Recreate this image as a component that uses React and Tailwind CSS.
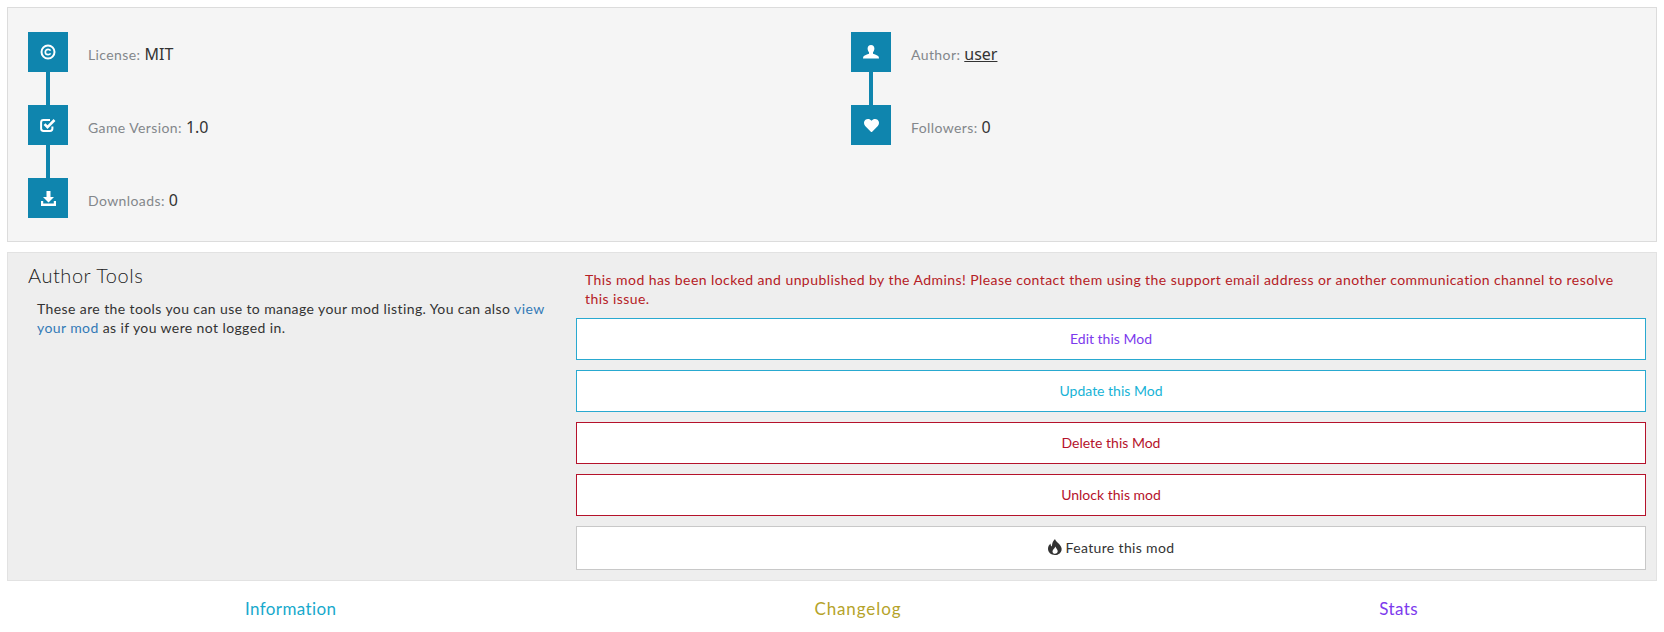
import React from "react";
import { FaHeart } from "react-icons/fa";

const font = "font-['Lato','Liberation_Sans',sans-serif]";

const CopyrightIcon = () => (
  <svg width="16" height="16" viewBox="0 0 16 16" fill="none" stroke="currentColor">
    <circle cx="8" cy="8" r="6.500" strokeWidth="2" />
    <path d="M10.600 6.600C10 5.700 9.100 5.300 8.100 5.300 6.500 5.300 5.300 6.400 5.300 8s1.200 2.700 2.800 2.700c1 0 1.900-.4 2.500-1.300" strokeWidth="1.700" />
  </svg>
);

const CheckIcon = () => (
  <svg width="16" height="15" viewBox="0 0 16 15" fill="none" stroke="currentColor">
    <path d="M10 2H3.500C2.100 2 1.100 3 1.100 4.400v6.200c0 1.400 1 2.400 2.400 2.400h6.500c1.400 0 2.400-1 2.400-2.400V8.500" strokeWidth="2" />
    <path d="M4.500 6.200l3 3L14.500 2" strokeWidth="2.600" />
  </svg>
);

const UserIcon = () => (
  <svg width="16" height="14" viewBox="0 0 16 14" fill="currentColor">
    <path d="M8 0c2.200 0 3.400 1.500 3.400 3.600 0 1.500-.6 2.900-1.400 3.700v1.500c1.700.5 5 1.600 5.600 2.700.2.500.4 1.300.4 2H0c0-.7.200-1.500.4-2 .6-1.100 3.900-2.200 5.600-2.700V7.300C5.200 6.500 4.600 5.100 4.600 3.600 4.600 1.500 5.800 0 8 0z" />
  </svg>
);

const DownloadIcon = () => (
  <svg width="15" height="15" viewBox="0 0 15 15" fill="currentColor">
    <path d="M5.500 0h4v6h3.500L7.500 11.500 2 6h3.500z" />
    <path d="M0 10h2.200v2.600h10.600V10H15v5H0z" />
  </svg>
);

const FlameIcon = () => (
  <svg width="14" height="16" viewBox="0 0 14 16" fill="currentColor" fillRule="evenodd">
    <path d="M7 0C7.500 2.500 12.500 5 13.500 9 14.300 13 11 16 7 16 3 16 0 13.300 0 9.800 0 7.500 1 6 2.500 4.500 2.500 6 3 7 4 7.500 3.800 4.500 5 2 7 0ZM7.300 7.500C6.800 9.800 4.500 10.500 4.500 12.500 4.500 14 5.700 14.800 7 14.800 8.500 14.800 9.700 13.800 9.700 12.300 9.700 10.500 8.100 9.500 7.300 7.500Z" />
  </svg>
);

const InfoRow = ({ icon, label, value, line, link }) => (
  <div className="flex flex-col">
    <div className="flex items-center">
      <div className="w-10 h-10 bg-[#0f85ae] text-white flex items-center justify-center shrink-0">
        {icon}
      </div>
      <p className="ml-5 text-[14px] tracking-[0.4px] text-[#83878b] mt-1">
        {label}:{" "}
        <span className={`font-['Noto_Sans',sans-serif] tracking-normal text-[16px] text-[#333] ${link ? "underline" : ""}`}>
          {value}
        </span>
      </p>
    </div>
    {line && <div className="w-1 h-[33px] bg-[#0f85ae] ml-[18px]"></div>}
  </div>
);

const ToolButton = ({ children, className }) => (
  <button className={`h-[42px] w-full border bg-white text-[14px] pb-[2px] flex items-center justify-center gap-1 ${className}`}>
    {children}
  </button>
);

const App = () => {
  return (
    <div className={`${font} bg-white h-[632px] px-[7px] pt-[7px] text-[#333]`}>
      {/* mod info */}
      <div className="h-[235px] border border-[#dcdcdc] bg-[#f5f5f5] grid grid-cols-2 pt-6 pl-5">
        <div>
          <InfoRow icon={<CopyrightIcon />} label="License" value="MIT" line />
          <InfoRow icon={<CheckIcon />} label="Game Version" value="1.0" line />
          <InfoRow icon={<DownloadIcon />} label="Downloads" value="0" />
        </div>
        <div className="pl-[9px]">
          <InfoRow icon={<UserIcon />} label="Author" value="user" line link />
          <InfoRow icon={<FaHeart size={15} />} label="Followers" value="0" />
        </div>
      </div>

      {/* author tools */}
      <div className="mt-[10px] h-[329px] border border-[#e2e2e2] bg-[#eeeeee] flex pl-5 pr-[10px] pt-2">
        <div className="w-[548px] shrink-0">
          <h2 className="text-[20px] leading-7 font-light tracking-[0.55px] text-[#222]">Author Tools</h2>
          <p className="text-[14px] tracking-[0.4px] leading-[19px] ml-[9px] mt-[10px] w-[510px]">
            These are the tools you can use to manage your mod listing. You can also{" "}
            <span className="text-[#337ab7]">view your mod</span> as if you were not logged in.
          </p>
        </div>
        <div className="flex-1 flex flex-col gap-[10px]">
          <p className="text-[14px] tracking-[0.43px] leading-[19px] text-[#b52025] pl-[9px] pr-[30px] mt-[9px]">
            This mod has been locked and unpublished by the Admins! Please contact them using the support email address or another communication channel to resolve this issue.
          </p>
          <ToolButton className="border-[#29a9d0] text-[#7c3aed]">Edit this Mod</ToolButton>
          <ToolButton className="border-[#29a9d0] text-[#17b3d6]">Update this Mod</ToolButton>
          <ToolButton className="border-[#b5122b] text-[#b5122b]">Delete this Mod</ToolButton>
          <ToolButton className="border-[#b5122b] text-[#b5122b]">Unlock this mod</ToolButton>
          <ToolButton className="border-[#c8c8c8] text-[#333] h-[44px] tracking-[0.35px] pb-0">
            <FlameIcon /> Feature this mod
          </ToolButton>
        </div>
      </div>

      {/* tabs */}
      <div className="flex justify-around pt-[15px] text-[17px] tracking-[0.4px]">
        <span className="text-[#17a9cc] -ml-px">Information</span>
        <span className="text-[#b5a32a] tracking-[0.9px]">Changelog</span>
        <span className="text-[#7c3aed]">Stats</span>
      </div>
    </div>
  );
};

export default App;
